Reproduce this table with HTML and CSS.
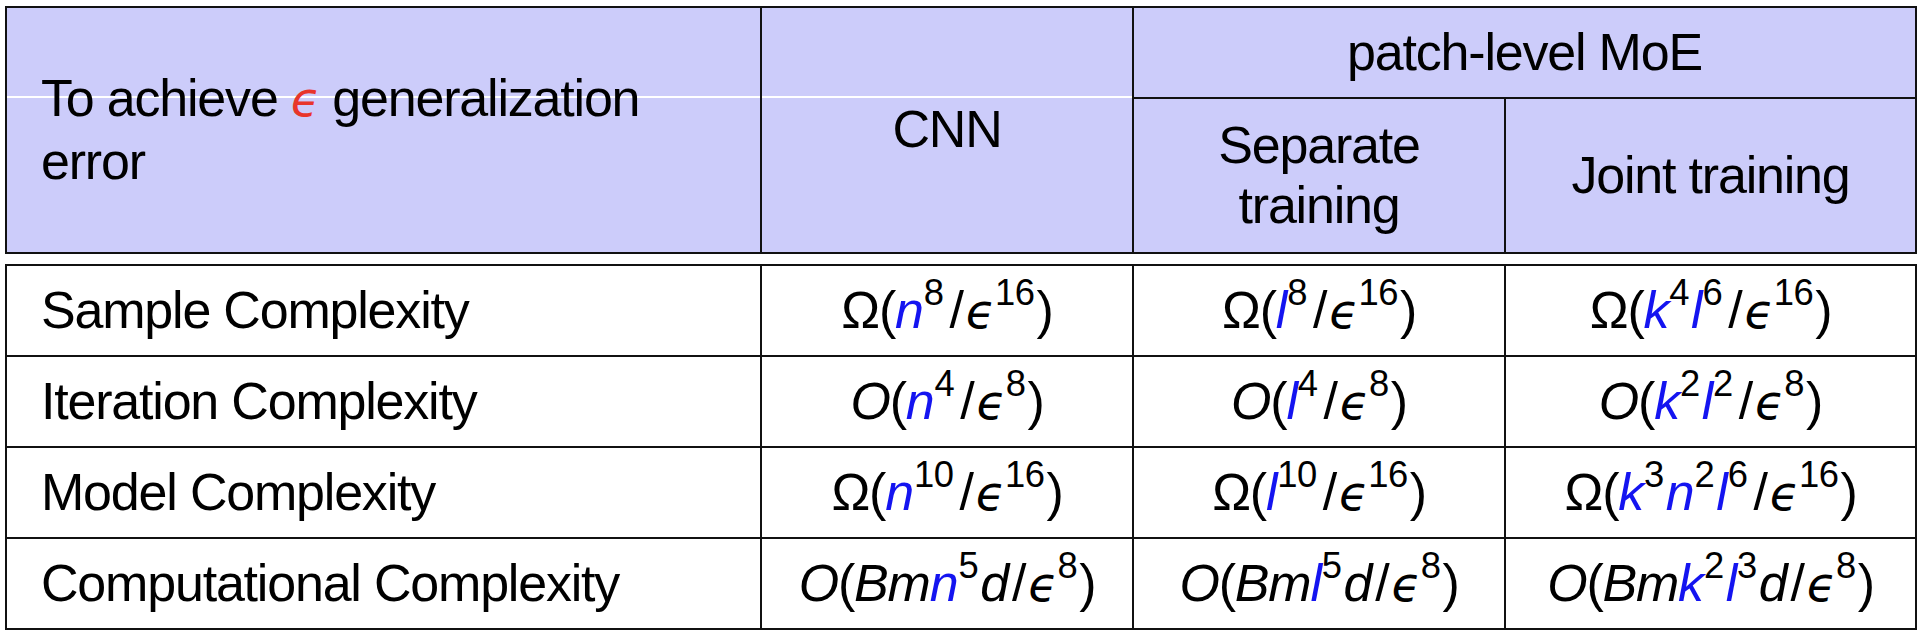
FILE: index.html
```html
<!DOCTYPE html>
<html>
<head>
<meta charset="utf-8">
<link rel="stylesheet" href="styles.css">
</head>
<body>
<div class="page">
  <table class="grid head">
    <colgroup><col class="c1"><col class="c2"><col class="c3"><col class="c4"></colgroup>
    <tr class="h1">
      <th rowspan="2" class="lead striped">To achieve <span class="eps red">ϵ</span> generalization<br>error</th>
      <th rowspan="2" class="striped cnn">CNN</th>
      <th colspan="2">patch-level MoE</th>
    </tr>
    <tr class="h2">
      <th>Separate<br>training</th>
      <th>Joint training</th>
    </tr>
  </table>
  <table class="grid body">
    <colgroup><col class="c1"><col class="c2"><col class="c3"><col class="c4"></colgroup>
    <tr>
      <td class="lead">Sample Complexity</td>
      <td>Ω(<i class="v">n</i><sup>8</sup><span class="sl">/</span><span class="eps">ϵ</span><sup>16</sup>)</td>
      <td>Ω(<i class="v">l</i><sup>8</sup><span class="sl">/</span><span class="eps">ϵ</span><sup>16</sup>)</td>
      <td>Ω(<i class="v">k</i><sup>4</sup><i class="v">l</i><sup>6</sup><span class="sl">/</span><span class="eps">ϵ</span><sup>16</sup>)</td>
    </tr>
    <tr>
      <td class="lead">Iteration Complexity</td>
      <td><i>O</i>(<i class="v">n</i><sup>4</sup><span class="sl">/</span><span class="eps">ϵ</span><sup>8</sup>)</td>
      <td><i>O</i>(<i class="v">l</i><sup>4</sup><span class="sl">/</span><span class="eps">ϵ</span><sup>8</sup>)</td>
      <td><i>O</i>(<i class="v">k</i><sup>2</sup><i class="v">l</i><sup>2</sup><span class="sl">/</span><span class="eps">ϵ</span><sup>8</sup>)</td>
    </tr>
    <tr>
      <td class="lead">Model Complexity</td>
      <td>Ω(<i class="v">n</i><sup>10</sup><span class="sl">/</span><span class="eps">ϵ</span><sup>16</sup>)</td>
      <td>Ω(<i class="v">l</i><sup>10</sup><span class="sl">/</span><span class="eps">ϵ</span><sup>16</sup>)</td>
      <td>Ω(<i class="v">k</i><sup>3</sup><i class="v">n</i><sup>2</sup><i class="v">l</i><sup>6</sup><span class="sl">/</span><span class="eps">ϵ</span><sup>16</sup>)</td>
    </tr>
    <tr>
      <td class="lead">Computational Complexity</td>
      <td><i>O</i>(<i>Bm</i><i class="v">n</i><sup>5</sup><i>d</i><span class="sl">/</span><span class="eps">ϵ</span><sup>8</sup>)</td>
      <td><i>O</i>(<i>Bm</i><i class="v">l</i><sup>5</sup><i>d</i><span class="sl">/</span><span class="eps">ϵ</span><sup>8</sup>)</td>
      <td><i>O</i>(<i>Bm</i><i class="v">k</i><sup>2</sup><i class="v">l</i><sup>3</sup><i>d</i><span class="sl">/</span><span class="eps">ϵ</span><sup>8</sup>)</td>
    </tr>
  </table>
</div>
</body>
</html>
```

FILE: styles.css
```css
html, body {
  margin: 0;
  padding: 0;
  background: #ffffff;
}
.page {
  padding: 6px 0 0 5px;
  font-family: "Liberation Sans", "DejaVu Sans", sans-serif;
  font-size: 52px;
  letter-spacing: -1.2px;
  color: #000;
}
.grid {
  border-collapse: collapse;
  table-layout: fixed;
  width: 1910px;
}
.c1 { width: 755px; }
.c2 { width: 372px; }
.c3 { width: 372px; }
.c4 { width: 411px; }
.grid th, .grid td {
  border: 2px solid #111;
  padding: 0;
  text-align: center;
  vertical-align: middle;
  font-weight: normal;
  line-height: 1.15;
  white-space: nowrap;
}
.head th {
  background: #ccccfa;
}
.head .h1 th { height: 89px; }
.head .h2 th { height: 153px; }
.head th.striped {
  background: linear-gradient(to bottom, #ccccfa 0, #ccccfa 88px, #ffffff 88px, #ffffff 90px, #ccccfa 90px);
}
.head th.lead {
  text-align: left;
  padding-left: 34px;
  line-height: 1.22;
}
.body {
  margin-top: 10px;
}
.body td { height: 89px; }
.body td.lead {
  text-align: left;
  padding-left: 34px;
}
i {
  font-style: italic;
}
.v {
  color: #1414f0;
}
.red {
  color: #e8352b;
}
.eps {
  font-family: "DejaVu Sans", sans-serif;
  font-style: italic;
  font-size: 0.92em;
}
.sl {
  margin: 0 3px 0 4px;
}
sup {
  font-size: 0.7em;
  vertical-align: 0.62em;
  line-height: 0;
  letter-spacing: -0.5px;
  margin-left: 1px;
  margin-right: 2px;
}
```
